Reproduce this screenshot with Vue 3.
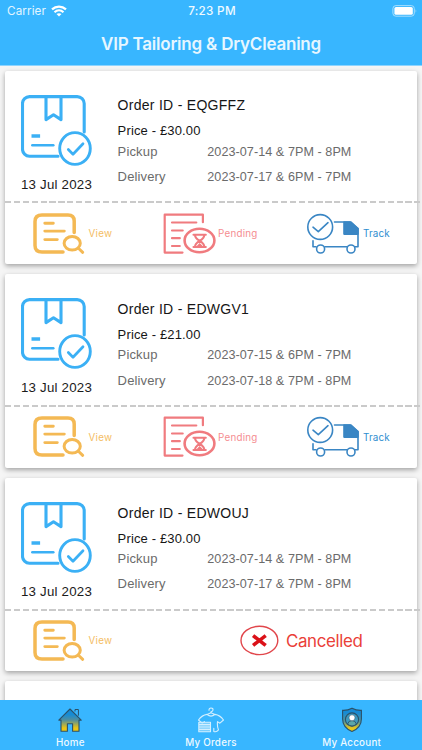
<script setup>
const orders = [
  { id: 'EQGFFZ', price: '30.00', pickup: '2023-07-14 & 7PM - 8PM', delivery: '2023-07-17 & 6PM - 7PM', date: '13 Jul 2023', cancelled: false },
  { id: 'EDWGV1', price: '21.00', pickup: '2023-07-15 & 6PM - 7PM', delivery: '2023-07-18 & 7PM - 8PM', date: '13 Jul 2023', cancelled: false },
  { id: 'EDWOUJ', price: '30.00', pickup: '2023-07-14 & 7PM - 8PM', delivery: '2023-07-17 & 7PM - 8PM', date: '13 Jul 2023', cancelled: true },
]
</script>

<template>
  <div class="screen">
    <header class="header">
      <div class="status">
        <div class="carrier">
          <span>Carrier</span>
          <svg width="16" height="12" viewBox="0 0 16 12" fill="none" stroke="#fff" stroke-width="2.2">
            <path d="M1 4.4C5 .6 11 .6 15 4.4M3.5 7.2C6.2 4.7 9.8 4.7 12.5 7.2" />
            <path d="M8 11.6 5.5 9.1C7 7.9 9 7.9 10.5 9.1Z" fill="#fff" stroke="none" />
          </svg>
        </div>
        <span class="clock">7:23 PM</span>
        <svg class="battery" width="26" height="12" viewBox="0 0 26 12">
          <rect x=".9" y=".6" width="21.4" height="10.6" rx="3" fill="none" stroke="#a5deff" stroke-width="1" />
          <rect x="2.4" y="2" width="18.4" height="7.8" rx="1.6" fill="#fff" />
          <path d="M23.6 4.2q1.6 1.7 0 3.5z" fill="#a5deff" />
        </svg>
      </div>
      <h1 class="title">VIP Tailoring &amp; DryCleaning</h1>
    </header>

    <main class="list">
      <article v-for="order in orders" :key="order.id" class="card">
        <div class="info">
          <div class="parcel">
            <svg width="72" height="72" viewBox="0 0 72 72" fill="none" stroke="#3bb0f5" stroke-width="3.1" stroke-linecap="round" stroke-linejoin="round">
              <path d="M37 61.2H8.5a7 7 0 0 1-7-7V8.6a7 7 0 0 1 7-7H56.2a7 7 0 0 1 7 7V37" />
              <path d="M25 2v22.6l7.5-4.8 7.5 4.8V2" />
              <path d="M10.5 41h8.6" stroke-width="3.5" stroke-linecap="butt" />
              <path d="M11.3 50.2h21" stroke-width="2.5" />
              <ellipse cx="54" cy="53.5" rx="15.3" ry="15.9" fill="#fff" stroke-width="2.9" />
              <path d="m47.3 54.5 4.7 4.7 10-10.5" stroke-width="2.7" />
            </svg>
            <span class="date">{{ order.date }}</span>
          </div>
          <div class="details">
            <h2 class="order-id">Order ID - {{ order.id }}</h2>
            <p class="price">Price - £{{ order.price }}</p>
            <dl class="times">
              <dt>Pickup</dt>
              <dd>{{ order.pickup }}</dd>
              <dt>Delivery</dt>
              <dd>{{ order.delivery }}</dd>
            </dl>
          </div>
        </div>
        <div class="dashes"></div>
        <div class="actions" :class="{ closed: order.cancelled }">
          <div class="action view">
            <svg width="52" height="42" viewBox="0 0 52 42" fill="none" stroke="#f4b954" stroke-width="3.5" stroke-linecap="round">
              <path d="M30 39H9q-7 0-7-6.5V8.5Q2 2 9 2h26q6.2 0 6.2 6v11.5" />
              <path d="M11.8 10.3h8.5M11.8 18.1h19.5M11.8 26.6h12.5" stroke-width="2.9" />
              <ellipse cx="39.2" cy="30.3" rx="8.1" ry="6.8" stroke-width="3" />
              <path d="m45.7 35.5 4 3.8" stroke-width="3" />
            </svg>
            <span>View</span>
          </div>
          <template v-if="!order.cancelled">
            <div class="action pending">
              <svg width="54" height="42" viewBox="0 0 54 42" fill="none" stroke="#f07b7f" stroke-width="2.2" stroke-linecap="round" stroke-linejoin="round">
                <path d="M19.5 39.6H1.7V1.7h38.2v7.5M9 9.5h24.3M9 17.5h10.7M9 25.2h7.8M9 33h7.8" />
                <ellipse cx="36.5" cy="27.5" rx="14.9" ry="11.8" stroke-width="2.6" />
                <path d="M30.5 21.7h12.3M30.5 34h12.3M32 21.7q0 3.5 4.7 6.2Q32 30.7 32 34M41.3 21.7q0 3.5-4.6 6.2 4.6 2.8 4.6 6.1" stroke-width="2.1" />
                <path d="m33.5 33.2 3.2-3.1 3.2 3.1z" fill="#f07b7f" stroke="none" />
              </svg>
              <span>Pending</span>
            </div>
            <div class="action track">
              <svg width="54" height="42" viewBox="0 0 54 42" fill="none" stroke="#3a86c4" stroke-width="1.6" stroke-linecap="round" stroke-linejoin="round">
                <circle cx="13.2" cy="14" r="12.4" />
                <path d="m6 14.200 5.300 4.500 9.700-9" />
                <path d="M27.500 9H43l8 6.500v18.200h-3M40 33.700H18M9 33.700H6v-6" />
                <path d="M37 9h7l7 6.500v5.600H37z" fill="#3a86c4" />
                <circle cx="13.600" cy="36" r="4" />
                <circle cx="44" cy="36" r="4" />
              </svg>
              <span>Track</span>
            </div>
          </template>
          <div v-else class="action cancelled">
            <svg width="40" height="32" viewBox="0 0 40 32" fill="none">
              <ellipse cx="19.4" cy="15.4" rx="18.4" ry="14.2" stroke="#e1464b" stroke-width="1.4" />
              <path d="m14.500 11.700 9.800 7.600m0-7.600-9.800 7.600" stroke="#db1118" stroke-width="3.600" stroke-linecap="square" />
            </svg>
            <span>Cancelled</span>
          </div>
        </div>
      </article>
      <div class="card next"></div>
    </main>

    <nav class="tabs">
      <a class="tab">
        <svg width="26" height="26" viewBox="0 0 26 26">
          <defs>
            <linearGradient id="house" x1="0" y1="0" x2="0" y2="1">
              <stop offset=".25" stop-color="#168bd5" />
              <stop offset=".5" stop-color="#528f9c" />
              <stop offset=".85" stop-color="#eac414" />
            </linearGradient>
          </defs>
          <path d="M18 4.5V2.5h3.400v6.200" fill="none" stroke="#2b5169" stroke-width="1" />
          <path d="M4 13v11.300h6.400v-7.500h5.200v7.500H22V13l2.200.2L13 2 1.800 13.200z" fill="url(#house)" stroke="#2b5169" stroke-width="1.100" stroke-linejoin="round" />
        </svg>
        <span>Home</span>
      </a>
      <a class="tab">
        <svg width="28" height="26" viewBox="0 0 28 26" fill="none" stroke="#d3efff" stroke-width="1.1" stroke-linecap="round" stroke-linejoin="round">
          <path d="M12 3.200Q12 1 14 1q2.200 0 2 2-.1 1.300-2 1.700v1.100l-4 1.600q-5 .8-8.500 5.600l3.600 3.200 2.400-1.600" />
          <path d="m14 5.800 4 1.600q5 .8 8.500 5.600l-3.600 3.200-2.400-1.600q-.5 5 1 8.300-2 2.500-4.700 1.500v-3.200M10.200 7.500q3.800 3.200 7.600 0" />
          <path d="M1.800 15.200h11.700v9.600H1.800zM1.800 17.600h11.700M1.800 20h11.700M1.800 22.400h11.700" fill="#a6defc" fill-opacity=".6" />
        </svg>
        <span>My Orders</span>
      </a>
      <a class="tab">
        <svg width="26" height="26" viewBox="0 0 26 26">
          <defs>
            <linearGradient id="shield" x1="0" y1="0" x2="0" y2="1">
              <stop offset=".2" stop-color="#168bd5" />
              <stop offset=".6" stop-color="#5b9794" />
              <stop offset=".85" stop-color="#e4c51b" />
            </linearGradient>
          </defs>
          <path d="M13 1.200q4.300 2.400 9.400 2.200v8.500q0 8.500-9.400 12.500-9.400-4-9.400-12.500V3.400Q8.700 3.600 13 1.200z" fill="url(#shield)" stroke="#2b5169" stroke-width="1.100" />
          <circle cx="13" cy="12.500" r="6.600" fill="#3c9ac0" stroke="#2b5169" stroke-width="1.100" />
          <path d="M8.600 17q1-3.500 4.400-3.500t4.400 3.500q-4.400 4-8.800 0z" fill="#5ba6a8" stroke="#2b5169" stroke-width=".9" />
          <circle cx="13" cy="10.800" r="3" fill="#fff" stroke="#2b5169" stroke-width=".5" />
        </svg>
        <span>My Account</span>
      </a>
    </nav>
  </div>
</template>

<style>
body {
  margin: 0;
}
</style>

<style scoped>
.screen {
  display: flex;
  flex-direction: column;
  width: 422px;
  height: 750px;
  overflow: hidden;
  background: #f5f5f5;
  font-family: "Liberation Sans", Arial, sans-serif;
}
.header {
  flex: none;
  height: 65px;
  border-bottom: 1px solid #8dd4ff;
  background: #38b6ff;
  color: #fff;
  font-family: Inter, sans-serif;
}
.status {
  display: grid;
  grid-template-columns: 1fr auto 1fr;
  align-items: center;
  height: 22px;
  padding: 0 5px 0 7px;
  font-size: 11.7px;
}
.carrier {
  display: flex;
  align-items: center;
  gap: 5px;
  color: #e2f5ff;
  letter-spacing: 0.1px;
}
.clock {
  font-weight: 500;
  color: #effaff;
  letter-spacing: 0.3px;
}
.battery {
  justify-self: end;
  margin-right: -1px;
}
.title {
  margin: 0;
  font-size: 17px;
  font-weight: 600;
  line-height: 44px;
  letter-spacing: -0.21px;
  text-align: center;
  white-space: nowrap;
  color: #e6f6ff;
}
.list {
  flex: 1;
  min-height: 0;
  display: flex;
  flex-direction: column;
  gap: 10px;
  padding: 4.6px 5px 0;
  overflow: hidden;
}
.card {
  flex: none;
  display: flex;
  flex-direction: column;
  height: 193.6px;
  border-radius: 2px;
  background: #fff;
  box-shadow: 0 2px 5px rgba(0, 0, 0, 0.34);
}
.info {
  display: flex;
  height: 130.8px;
}
.parcel {
  display: flex;
  flex-direction: column;
  align-items: center;
  width: 103px;
  padding-top: 24px;
}
.parcel svg {
  flex: none;
}
.date {
  margin-top: 10px;
  font-size: 13.3px;
  line-height: 16px;
  letter-spacing: 0.2px;
  color: #1b1b1b;
  white-space: nowrap;
}
.details {
  padding: 25.8px 0 0 9.6px;
  white-space: nowrap;
}
.order-id {
  margin: 0;
  font-size: 14px;
  font-weight: 400;
  line-height: 18px;
  letter-spacing: 0.28px;
  color: #161616;
}
.price {
  margin: 8px 0 0;
  font-size: 13px;
  line-height: 17px;
  letter-spacing: 0.15px;
  color: #161616;
}
.times {
  display: grid;
  grid-template-columns: 89.7px auto;
  row-gap: 9.4px;
  margin: 4.2px 0 0;
  font-size: 13px;
  line-height: 16px;
  letter-spacing: 0.15px;
  color: #6b6b6b;
}
.times dd {
  margin: 0;
  font-size: 12.6px;
  letter-spacing: 0.06px;
}
.dashes {
  flex: none;
  width: 415px;
  height: 2px;
  background: repeating-linear-gradient(90deg, #cacaca 0 6.2px, transparent 6.2px 8.9px);
}
.actions {
  flex: 1;
  display: grid;
  grid-template-columns: 129.5px 144.5px 1fr;
  align-items: center;
  padding-left: 28px;
  font-family: Inter, sans-serif;
  font-size: 9.8px;
}
.actions.closed {
  grid-template-columns: 207px 1fr;
}
.action {
  display: flex;
  align-items: center;
}
.view {
  gap: 3.5px;
  color: #f4bd63;
  letter-spacing: 0.3px;
}
.pending {
  gap: 1.5px;
  color: #f58d91;
  letter-spacing: 0.25px;
}
.track {
  gap: 2px;
  color: #2f8ed0;
  letter-spacing: 0.2px;
}
.cancelled {
  gap: 6px;
  font-size: 16.9px;
  letter-spacing: -0.35px;
  color: #ea4038;
}
.tabs {
  flex: none;
  display: grid;
  grid-template-columns: repeat(3, 1fr);
  height: 50px;
  background: #38b6ff;
  color: #edf9ff;
  font-family: Inter, sans-serif;
  font-size: 9.8px;
  font-weight: 500;
  letter-spacing: 0.25px;
}
.tab {
  display: flex;
  flex-direction: column;
  align-items: center;
  gap: 2px;
  padding-top: 6.5px;
}
.tab span {
  line-height: 15px;
}
</style>
